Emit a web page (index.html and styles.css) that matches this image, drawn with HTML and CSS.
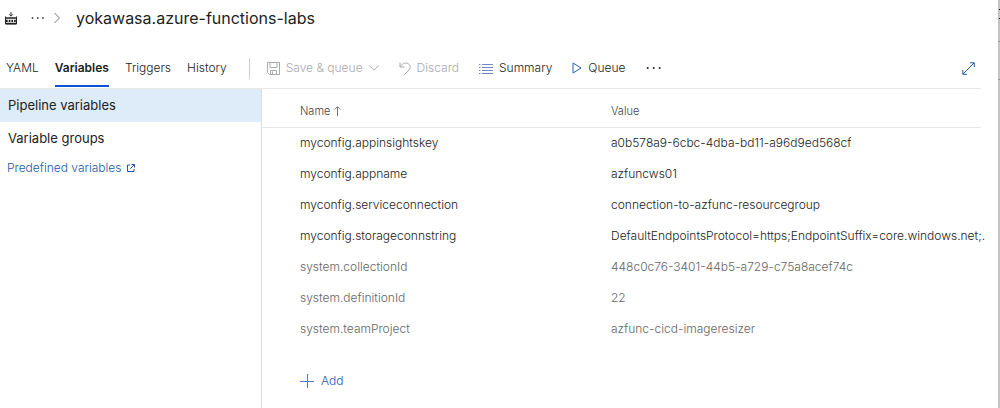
FILE: index.html
```html
<!DOCTYPE html>
<html lang="en">
<head>
<meta charset="utf-8">
<title>yokawasa.azure-functions-labs</title>
<link rel="stylesheet" href="styles.css">
</head>
<body>
<div class="app">
  <div class="page">
    <header class="crumbs">
      <svg class="crumb-logo" width="12" height="13" viewBox="0 0 12 13" aria-hidden="true">
        <path d="M6 0v4M4.200 2.300L6 4.200L7.800 2.300" fill="none" stroke="#333" stroke-width="1"/>
        <path d="M.5 4.500V12h11V4.500" fill="none" stroke="#222" stroke-width="1"/>
        <path d="M1 6h10M1 11.500h10" stroke="#222" stroke-width="1.600"/>
        <path d="M1 8.900h10" stroke="#222" stroke-width="2.200" stroke-dasharray="1.700 1"/>
      </svg>
      <button class="crumb-more" aria-label="More levels">
        <svg width="14" height="4" viewBox="0 0 14 4" fill="#444"><circle cx="1.500" cy="2" r=".9"/><circle cx="6.800" cy="2" r=".9"/><circle cx="12" cy="2" r=".9"/></svg>
      </button>
      <svg width="6" height="12" viewBox="0 0 6 12" fill="none" stroke="#777" aria-hidden="true"><path d="M.5 1L5.500 6L.5 11"/></svg>
      <h1 class="title">yokawasa.azure-functions-labs</h1>
    </header>

    <div class="bar">
      <nav class="tabs">
        <a class="tab" href="#yaml">YAML</a>
        <a class="tab tab-active" href="#variables" aria-current="page">Variables</a>
        <a class="tab" href="#triggers">Triggers</a>
        <a class="tab" href="#history">History</a>
      </nav>
      <div class="tools">
        <button class="tool" disabled>
          <svg width="13" height="13" viewBox="0 0 13 13" fill="none" stroke="currentColor"><path d="M.5.5h12v12h-10l-2-2zM3 .5v5h7v-5M3.500 12.500v-4h6v4M5.500 9.500v3"/></svg>
          <span>Save &amp; queue</span>
          <svg width="10" height="6" viewBox="0 0 10 6" fill="none" stroke="currentColor"><path d="M.3.5L5 5.200L9.700.5"/></svg>
        </button>
        <button class="tool" disabled>
          <svg width="12" height="13" viewBox="0 0 12 13" fill="none" stroke="currentColor"><path d="M1 .5V5h4.500M1 5C3 1.500 6 .6 8.500 1.500C11.800 2.800 12 6 10 8L5.500 12.500"/></svg>
          <span>Discard</span>
        </button>
        <button class="tool">
          <svg width="14" height="11" viewBox="0 0 14 11" fill="none" stroke="#6f86c8"><path d="M0 1.500h1.500M3 1.500h11M0 4.500h1.500M3 4.500h11M0 7.500h1.500M3 7.500h11M0 10.500h1.500M3 10.500h11"/></svg>
          <span>Summary</span>
        </button>
        <button class="tool">
          <svg width="10" height="12" viewBox="0 0 10 12" fill="none" stroke="#2560b0"><path d="M1 1L9 6L1 11z"/></svg>
          <span>Queue</span>
        </button>
        <button class="tool" aria-label="More actions">
          <svg width="16" height="4" viewBox="0 0 16 4" fill="#222"><circle cx="1.700" cy="2" r="1"/><circle cx="7.700" cy="2" r="1"/><circle cx="13.700" cy="2" r="1"/></svg>
        </button>
      </div>
      <button class="tool expand" aria-label="Full screen">
        <svg width="13" height="13" viewBox="0 0 13 13" fill="none" stroke="#1d5aa8"><path d="M1 12L12 1M8 .8h4.300V5M.8 8v4.300H5"/></svg>
      </button>
    </div>

    <div class="body">
      <aside class="side">
        <a class="side-item side-active" href="#pipeline">Pipeline variables</a>
        <a class="side-item" href="#groups">Variable groups</a>
        <a class="side-link" href="#predefined">Predefined variables
          <svg width="8" height="8" viewBox="0 0 8 8" fill="none" stroke="currentColor"><path d="M3 1H.5v6.500H7V5M3.300 4.700L7.300.7M4.500.5h3v3"/></svg>
        </a>
      </aside>
      <main class="main">
        <table class="vars">
          <thead>
            <tr>
              <th class="col-name" scope="col"><span class="sort">Name
                <svg width="7" height="10" viewBox="0 0 7 10" fill="none" stroke="#777"><path d="M3.500 10V.8M.7 3.500L3.500.7L6.300 3.500"/></svg></span></th>
              <th scope="col">Value</th>
            </tr>
          </thead>
          <tbody>
            <tr><td>myconfig.appinsightskey</td><td>a0b578a9-6cbc-4dba-bd11-a96d9ed568cf</td></tr>
            <tr><td>myconfig.appname</td><td>azfuncws01</td></tr>
            <tr><td>myconfig.serviceconnection</td><td>connection-to-azfunc-resourcegroup</td></tr>
            <tr><td>myconfig.storageconnstring</td><td>DefaultEndpointsProtocol=https;EndpointSuffix=core.windows.net;.</td></tr>
            <tr class="system"><td>system.collectionId</td><td>448c0c76-3401-44b5-a729-c75a8acef74c</td></tr>
            <tr class="system"><td>system.definitionId</td><td>22</td></tr>
            <tr class="system"><td>system.teamProject</td><td>azfunc-cicd-imageresizer</td></tr>
          </tbody>
        </table>
        <button class="add">
          <svg width="14" height="14" viewBox="0 0 14 14" fill="none" stroke="#4f7cc4"><path d="M7.500 0v14M0 7.500h14"/></svg>
          Add
        </button>
      </main>
    </div>
  </div>
  <div class="edge" aria-hidden="true">
    <svg width="2" height="84" viewBox="0 0 2 84"><path d="M1 9h1v1h-1zM1 18h1v1h-1z" fill="#222"/><path d="M0 41h2v1H0zM0 79h2v1H0z" fill="#999"/></svg>
  </div>
</div>
</body>
</html>
```
FILE: styles.css
```css
* { box-sizing: border-box; }

body {
  margin: 0;
  background: #fff;
  color: #222;
  font: 300 12px/18px Inter, "Liberation Sans", sans-serif;
}

a { color: inherit; text-decoration: none; }

svg { display: block; flex: none; }

button {
  padding: 0;
  border: 0;
  background: none;
  color: inherit;
  font: inherit;
}

.app { display: flex; min-height: 100vh; }

.page {
  flex: 1;
  min-width: 0;
  display: flex;
  flex-direction: column;
}

.edge { width: 2px; background: #c4c4c4; }

.crumbs {
  display: flex;
  align-items: center;
  height: 36px;
  padding-left: 5px;
}

.crumb-more { margin: 0 9px 0 14px; }

.title {
  margin: 0 0 0 16px;
  color: #222;
  font-size: 16px;
  font-weight: 400;
}

.bar {
  display: flex;
  align-items: center;
  height: 53px;
  margin-right: 17px;
  padding: 12px 6px 0;
  border-bottom: 1px solid #e8e8e8;
}

.tabs {
  display: flex;
  align-self: stretch;
  gap: 16px;
  padding-right: 22px;
}

.tab {
  display: flex;
  align-items: center;
  height: 39px;
  padding-top: 2px;
  border-bottom: 2px solid transparent;
}

.tab-active {
  border-color: #0b55d4;
  font-weight: 600;
}

.tools {
  display: flex;
  align-items: center;
  gap: 20px;
  height: 21px;
  padding-left: 17px;
  border-left: 1px solid #ccc;
}

.tool {
  display: flex;
  align-items: center;
  gap: 6px;
  white-space: nowrap;
}

.tool:disabled { color: #aaa; }

.expand { margin-left: auto; }

.body { flex: 1; display: flex; }

.side {
  width: 262px;
  flex: none;
  border-right: 1px solid #ddd;
}

.side-item {
  display: block;
  padding: 7px 8px 8px;
  font-size: 13px;
  font-weight: 400;
}

.side-active { background: #deebf8; }

.side-link {
  display: flex;
  align-items: center;
  gap: 5px;
  padding: 4px 7px;
  color: #2058aa;
}

.main {
  flex: 1;
  min-width: 0;
  padding-right: 17px;
}

.vars {
  width: 100%;
  table-layout: fixed;
  border-collapse: collapse;
}

.vars th {
  height: 38px;
  padding: 6px 0 0;
  border-bottom: 1px solid #e8e8e8;
  color: #444;
  font-size: 11px;
  font-weight: 300;
  text-align: left;
}

.vars .col-name { width: 349px; }

.vars th:first-child,
.vars td:first-child { padding-left: 38px; }

.vars td {
  height: 31px;
  padding: 0;
  white-space: nowrap;
}

.sort { display: flex; align-items: center; gap: 4px; }

.system { color: #666; }

.add {
  display: flex;
  align-items: center;
  gap: 7px;
  margin: 28px 0 0 38px;
  color: #2058b4;
}
```
